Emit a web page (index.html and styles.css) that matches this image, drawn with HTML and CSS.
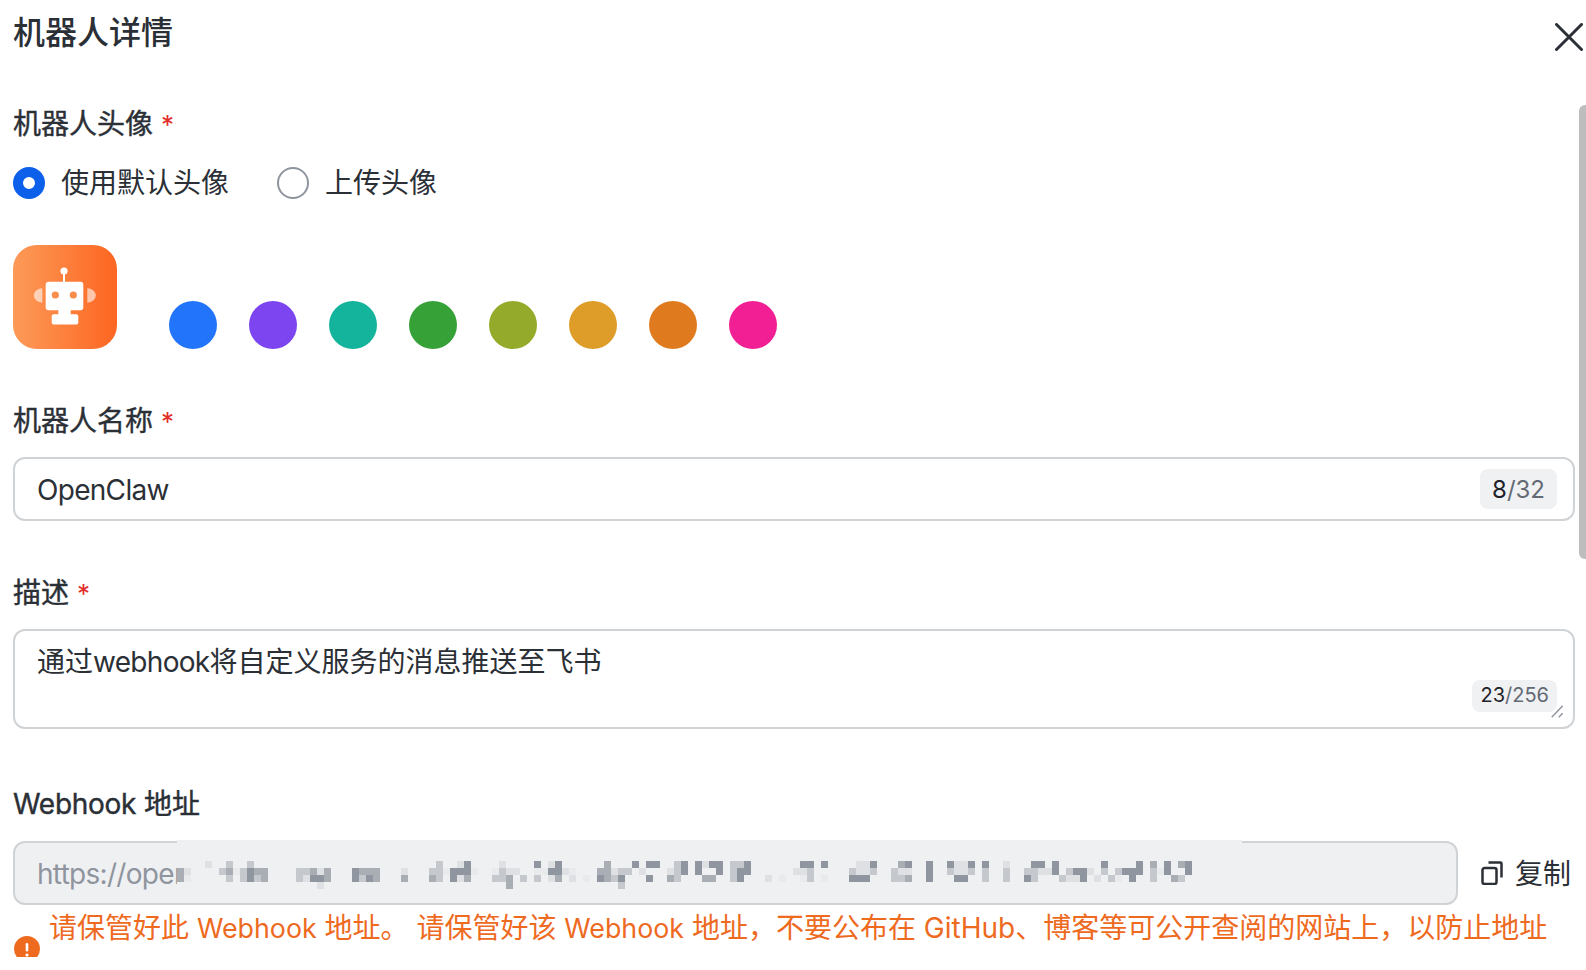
FILE: index.html
```html
<!DOCTYPE html>
<html lang="zh-CN">
<head>
<meta charset="utf-8">
<title>机器人详情</title>
<link rel="stylesheet" href="styles.css">
</head>
<body>
<div class="dialog">
  <header class="head">
    <h1 class="title">机器人详情</h1>
    <svg class="close" viewBox="0 0 28 28" aria-label="关闭"><path d="M1.5 1.5l25 25M26.5 1.5l-25 25"/></svg>
  </header>

  <div class="form">
    <div class="label lab-avatar">机器人头像<span class="req">*</span></div>
    <div class="radios">
      <label class="radio"><span class="dot on"></span>使用默认头像</label>
      <label class="radio"><span class="dot"></span>上传头像</label>
    </div>
    <div class="avatar-row">
      <div class="avatar">
        <svg viewBox="0 0 104 104" class="robot">
          <circle cx="51" cy="26" r="3.6" class="w"/>
          <rect x="50" y="26" width="2" height="12" class="w"/>
          <rect x="32.7" y="36.7" width="37.6" height="28.6" rx="3" class="w"/>
          <circle cx="42.3" cy="50" r="3.6" class="eye"/>
          <circle cx="60.3" cy="50" r="3.6" class="eye"/>
          <path d="M29.3 43.3a8.5 7.2 0 0 0 0 14.4z" class="ear"/>
          <path d="M74.3 43.3a8.5 7.2 0 0 1 0 14.4z" class="ear"/>
          <rect x="45.3" y="65" width="12.4" height="6" class="w"/>
          <rect x="38.7" y="69.3" width="26.6" height="10.2" rx="2" class="w"/>
        </svg>
      </div>
      <span class="swatch s1"></span>
      <span class="swatch s2"></span>
      <span class="swatch s3"></span>
      <span class="swatch s4"></span>
      <span class="swatch s5"></span>
      <span class="swatch s6"></span>
      <span class="swatch s7"></span>
      <span class="swatch s8"></span>
    </div>

    <div class="label lab-name">机器人名称<span class="req">*</span></div>
    <div class="box input">
      <span class="value lat">OpenClaw</span>
      <span class="count big"><b>8</b>/32</span>
    </div>

    <div class="label lab-desc">描述<span class="req">*</span></div>
    <div class="box area">
      <span class="value">通过<span class="lat">webhook</span>将自定义服务的消息推送至飞书</span>
      <span class="count small"><b>23</b>/256</span>
      <svg class="grip" viewBox="0 0 12 13"><path d="M.7 12.3l11-11.6M7.7 12.3l4-4"/></svg>
    </div>

    <div class="label lab-hook"><span class="lat-soft">Webhook</span> 地址</div>
    <div class="hook-row">
      <div class="box readonly">
        <span class="value lat">https://open</span>
        <svg class="mosaic" viewBox="0 0 1065 62" width="1065" height="62">
          <rect width="1065" height="62" class="mbg"/>
          <path class="ma" d="M287 24.5h7M357 24.5h7M378 24.5h7M455 24.5h7M469 24.5h14M504 24.5h7M518 24.5h7M532 24.5h14M567 24.5h7M623 24.5h14M644 24.5h7M693 24.5h7M728 24.5h7M749 24.5h7M770 24.5h7M791 24.5h7M805 24.5h7M854 24.5h14M875 24.5h7M924 24.5h7M959 24.5h7M987 24.5h7M1008 24.5h7"/>
          <path class="mb" d="M427 24.5h7M721 24.5h7M973 24.5h7M1001 24.5h7"/>
          <path class="mc" d="M49 24.5h7M70 24.5h7M259 24.5h7M497 24.5h7M553 24.5h14"/>
          <path class="md" d="M28 24.5h7M280 24.5h7M322 24.5h7M371 24.5h7M525 24.5h7M679 24.5h14M777 24.5h14M826 24.5h7"/>
          <path class="ma" d="M70 31.5h7M175 31.5h7M273 31.5h21M371 31.5h14M504 31.5h7M518 31.5h7M539 31.5h7M560 31.5h14M749 31.5h7M875 31.5h7M896 31.5h14M945 31.5h21M987 31.5h7M1008 31.5h7"/>
          <path class="mb" d="M0 31.5h7M49 31.5h7M77 31.5h14M133 31.5h7M147 31.5h7M182 31.5h21M420 31.5h14"/>
          <path class="mc" d="M42 31.5h7M63 31.5h7M119 31.5h14M252 31.5h14M322 31.5h7M441 31.5h14M497 31.5h7M553 31.5h7M630 31.5h7M672 31.5h7M693 31.5h7M714 31.5h7M770 31.5h7M791 31.5h7M805 31.5h7M826 31.5h7M847 31.5h14M889 31.5h7M924 31.5h7M938 31.5h7M973 31.5h7"/>
          <path class="md" d="M7 31.5h7M140 31.5h7M224 31.5h7M329 31.5h14M385 31.5h7M434 31.5h7M462 31.5h7M490 31.5h7M616 31.5h14M679 31.5h14M721 31.5h14M777 31.5h14M861 31.5h14M910 31.5h7"/>
          <path class="me" d="M56 31.5h7M266 31.5h7M294 31.5h7M315 31.5h7M357 31.5h14M392 31.5h7M980 31.5h7"/>
          <path class="ma" d="M70 38.5h7M133 38.5h14M175 38.5h7M189 38.5h7M273 38.5h7M420 38.5h7M441 38.5h7M469 38.5h7M560 38.5h7M672 38.5h21M749 38.5h7M777 38.5h14M847 38.5h7M903 38.5h7M952 38.5h7"/>
          <path class="mb" d="M0 38.5h7M84 38.5h7M147 38.5h7M196 38.5h7M224 38.5h7M252 38.5h7M287 38.5h7M329 38.5h7M378 38.5h7M427 38.5h7M490 38.5h7M525 38.5h14M728 38.5h7M994 38.5h7"/>
          <path class="mc" d="M49 38.5h7M63 38.5h7M77 38.5h7M119 38.5h7M182 38.5h7M259 38.5h7M315 38.5h14M343 38.5h7M357 38.5h7M434 38.5h7M497 38.5h7M553 38.5h7M630 38.5h7M714 38.5h14M805 38.5h7M826 38.5h7M854 38.5h7M882 38.5h7M931 38.5h7M973 38.5h7M1001 38.5h7"/>
          <path class="md" d="M126 38.5h7M280 38.5h7M371 38.5h7M392 38.5h7M588 38.5h7M889 38.5h14M917 38.5h7"/>
          <path class="me" d="M7 38.5h7M406 38.5h7M602 38.5h7M623 38.5h7M644 38.5h7M938 38.5h7"/>
          <path class="mb" d="M329 45.5h7"/>
          <path class="mc" d="M441 45.5h7"/>
          <path class="md" d="M140 45.5h7"/>
        </svg>
      </div>
      <div class="copy">
        <svg class="copy-icon" viewBox="0 0 22 24"><path d="M3.5 7h10a2 2 0 0 1 2 2v12a2 2 0 0 1-2 2h-10a2 2 0 0 1-2-2V9a2 2 0 0 1 2-2zM7.5 1.5h12a1 1 0 0 1 1 1v14"/></svg>
        <span class="copy-text">复制</span>
      </div>
    </div>

    <div class="notice">
      <svg class="warn" viewBox="0 0 26 26"><circle cx="13" cy="13" r="13" class="warn-bg"/><rect x="11.7" y="7" width="2.6" height="8.5" rx="1.3" class="warn-fg"/><circle cx="13" cy="19" r="1.6" class="warn-fg"/></svg>
      <p class="notice-text">请保管好此 <span class="lat-small">Webhook</span> 地址。 请保管好该 <span class="lat-small">Webhook</span> 地址，不要公布在 GitHub、博客等可公开查阅的网站上，以防止地址泄露后被恶意调用。</p>
    </div>
  </div>

  <div class="scrollbar"></div>
</div>
</body>
</html>
```
FILE: styles.css
```css
* { box-sizing: border-box; }
html, body { margin: 0; height: 100%; background: #fff; overflow: hidden; }
body {
  font-family: Inter, "Noto Sans CJK SC", sans-serif;
  font-size: 28px;
  color: #2b2f36;
}
.lat { letter-spacing: -.7px; }
.lat-soft { letter-spacing: -.3px; }
.lat-small { font-size: 26.8px; }
.dialog {
  position: relative;
  height: 957px;
  overflow: hidden;
  padding-left: 13px;
}
.head {
  display: flex;
  justify-content: space-between;
  height: 64px;
}
.title {
  margin: 0;
  height: 64px;
  font-size: 32px;
  font-weight: 500;
  line-height: 66px;
}
.close {
  width: 28px;
  height: 28px;
  margin: 23px 3px 0 0;
  fill: none;
  stroke: #2b2f36;
  stroke-width: 3;
  stroke-linecap: round;
}
.form { width: 1562px; }
.label {
  height: 40px;
  line-height: 42px;
  -webkit-text-stroke: .4px #2b2f36;
}
.lab-avatar { margin-top: 39px; }
.lab-name { margin-top: 51px; }
.lab-desc { margin-top: 51px; }
.lab-hook { margin-top: 54px; }
.req {
  color: #e22e28;
  margin-left: 8px;
  font-size: 26px;
  -webkit-text-stroke: 0;
}

.radios { display: flex; gap: 48px; margin-top: 24px; }
.radio { display: flex; align-items: center; gap: 16px; height: 32px; line-height: 36px; }
.dot {
  width: 32px;
  height: 32px;
  border-radius: 50%;
  border: 2px solid #8f959e;
  background: #fff;
}
.dot.on { border: 10px solid #0d60e9; }

.avatar-row { display: flex; align-items: flex-end; margin-top: 46px; gap: 32px; }
.avatar {
  width: 104px;
  height: 104px;
  border-radius: 24px;
  background: linear-gradient(90deg, #fd9a58, #fc6621);
  margin-right: 20px;
}
.robot { display: block; width: 104px; height: 104px; }
.w { fill: #fff; }
.eye { fill: #f88e4d; }
.ear { fill: #fff; opacity: .6; }
.swatch { width: 48px; height: 48px; border-radius: 50%; }
.s1 { background: #2274fa; }
.s2 { background: #7c45f0; }
.s3 { background: #14b39b; }
.s4 { background: #35a136; }
.s5 { background: #93aa2a; }
.s6 { background: #de9c28; }
.s7 { background: #df7a1f; }
.s8 { background: #f11f93; }

.box {
  position: relative;
  border: 2px solid #d0d3d6;
  border-radius: 12px;
  padding: 0 22px;
}
.value { line-height: 42px; }
.input .value, .readonly .value { padding-top: 2px; }
.input {
  display: flex;
  align-items: center;
  justify-content: space-between;
  height: 64px;
  margin-top: 17px;
  padding-right: 16px;
}
.count { background: #f0f1f3; border-radius: 8px; color: #646a73; }
.count b { font-weight: 400; color: #1f2329; }
.big { font-size: 24px; line-height: 42px; height: 40px; padding: 0 12px; }
.area { height: 100px; margin-top: 17px; padding-top: 10px; }
.small {
  position: absolute;
  right: 16px;
  bottom: 15px;
  font-size: 20px;
  line-height: 30px;
  height: 32px;
  padding: 0 8px;
}
.grip {
  position: absolute;
  right: 10px;
  bottom: 9px;
  width: 12px;
  height: 13px;
  fill: none;
  stroke: #8f959e;
  stroke-width: 1.4;
}

.hook-row { display: flex; align-items: center; margin-top: 18px; }
.readonly {
  display: flex;
  align-items: center;
  width: 1445px;
  height: 64px;
  background: #eff0f2;
  color: #8f959e;
}
.mosaic {
  position: absolute;
  left: 162px;
  top: -3px;
  shape-rendering: crispEdges;
  fill: none;
  stroke-width: 7;
}
.mbg { fill: #eff0f2; stroke: none; }
.ma { stroke: #8f96a0; }
.mb { stroke: #a9aeb5; }
.mc { stroke: #c5c8cd; }
.md { stroke: #dfe0e3; }
.me { stroke: #e9eaec; }
.copy { display: flex; align-items: center; gap: 12px; margin-left: 23px; }
.copy-icon {
  width: 22px;
  height: 24px;
  fill: none;
  stroke: #2b2f36;
  stroke-width: 2.5;
}
.copy-text { padding-bottom: 2px; }
.notice { display: flex; margin-top: 1px; }
.warn { flex: none; width: 26px; height: 26px; margin: 30px 9px 0 1px; }
.warn-bg { fill: #ee6a1f; }
.warn-fg { fill: #fff; }
.notice-text { margin: 0; line-height: 44px; color: #ee6a1f; }

.scrollbar {
  position: absolute;
  right: 0;
  top: 105px;
  width: 7px;
  height: 454px;
  background: #bdbdbd;
  border-radius: 6px 0 0 6px;
}
```
